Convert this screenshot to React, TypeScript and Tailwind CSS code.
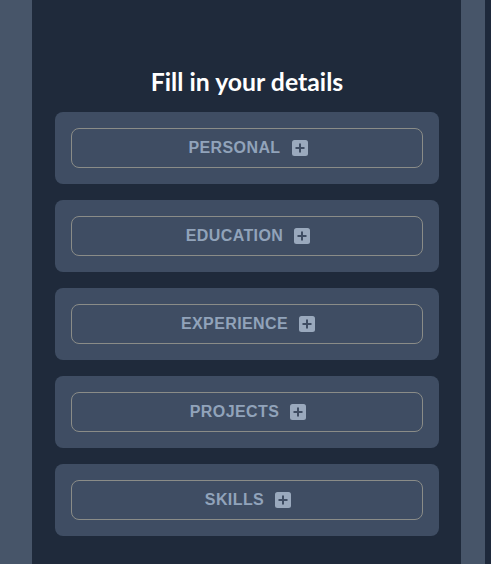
const sections = ['PERSONAL', 'EDUCATION', 'EXPERIENCE', 'PROJECTS', 'SKILLS'];

function PlusSquare() {
  return (
    <svg width="16" height="16" viewBox="0 0 16 16" className="shrink-0">
      <rect x="0" y="0" width="16" height="16" rx="2.5" fill="#9aa9bd" />
      <path d="M8 3.5v9M3.5 8h9" stroke="#3f4d63" strokeWidth="2" />
    </svg>
  );
}

function SectionCard({ label }: { label: string }) {
  return (
    <div className="rounded-lg bg-[#3f4d63] p-4">
      <button className="flex h-10 w-full items-center justify-center gap-[11px] rounded-lg border border-[#8a8c88] bg-transparent pl-[2px]">
        <span className="font-['Liberation_Sans',Arial,sans-serif] text-base font-bold tracking-wide text-[#91a3ba]">
          {label}
        </span>
        <PlusSquare />
      </button>
    </div>
  );
}

export default function App() {
  return (
    <div className="flex h-screen min-h-[564px] w-full overflow-hidden bg-[#1e293b]">
      <div className="w-[32px] shrink-0 bg-[#475569]" />
      <div className="flex w-[429px] shrink-0 flex-col bg-[#1f2a3b] pl-[23px] pr-[22px]">
        <h1 className="mt-[66px] mb-[15px] text-center font-['Lato','Noto_Sans',sans-serif] text-[24.8px] font-bold leading-[31px] text-white">
          Fill in your details
        </h1>
        <div className="flex flex-col gap-4">
          {sections.map((s) => (
            <SectionCard key={s} label={s} />
          ))}
        </div>
      </div>
      <div className="w-[24px] shrink-0 bg-[#475569]" />
    </div>
  );
}
